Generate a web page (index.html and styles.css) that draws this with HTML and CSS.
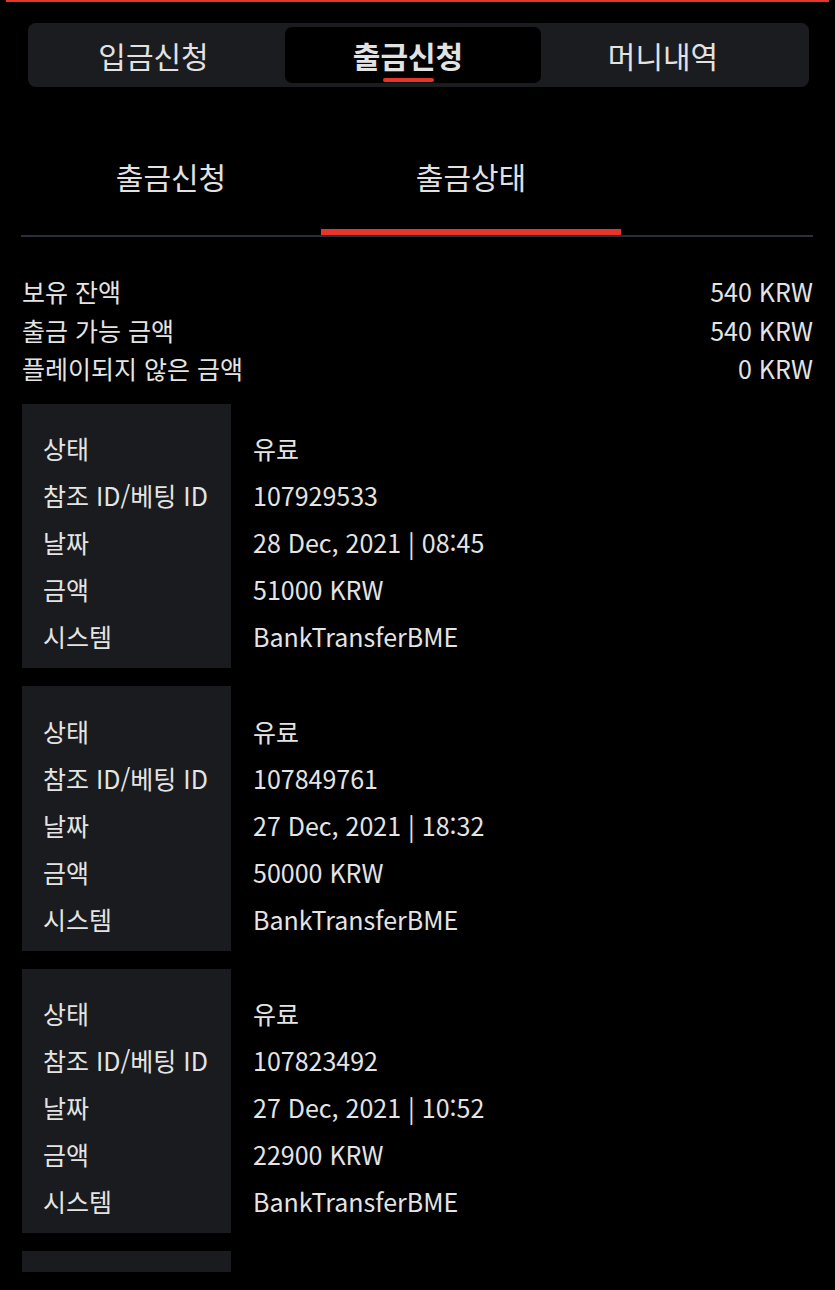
FILE: index.html
```html
<!DOCTYPE html>
<html lang="ko">
<head>
  <meta charset="UTF-8">
  <meta name="viewport" content="width=device-width, initial-scale=1.0">
  <title>출금상태</title>
  <link rel="stylesheet" href="styles.css">
</head>
<body>
  <div class="top-line"></div>

  <!-- 상단 탭 -->
  <nav class="main-tabs">
    <a class="main-tab">입금신청<span class="bar"></span></a>
    <a class="main-tab active">출금신청<span class="bar"></span></a>
    <a class="main-tab">머니내역<span class="bar"></span></a>
  </nav>

  <!-- 하위 탭 -->
  <nav class="sub-tabs">
    <a class="sub-tab">출금신청</a>
    <a class="sub-tab active">출금상태</a>
  </nav>

  <!-- 잔액 정보 -->
  <div class="balance">
    <div class="balance-row"><span>보유 잔액</span><span>540 KRW</span></div>
    <div class="balance-row"><span>출금 가능 금액</span><span>540 KRW</span></div>
    <div class="balance-row"><span>플레이되지 않은 금액</span><span>0 KRW</span></div>
  </div>

  <!-- 출금 내역 -->
  <div class="history">
    <div class="card">
      <ul class="labels">
        <li>상태</li>
        <li>참조 ID/베팅 ID</li>
        <li>날짜</li>
        <li>금액</li>
        <li>시스템</li>
      </ul>
      <ul class="values">
        <li>유료</li>
        <li>107929533</li>
        <li>28 Dec, 2021 | 08:45</li>
        <li>51000 KRW</li>
        <li>BankTransferBME</li>
      </ul>
    </div>

    <div class="card">
      <ul class="labels">
        <li>상태</li>
        <li>참조 ID/베팅 ID</li>
        <li>날짜</li>
        <li>금액</li>
        <li>시스템</li>
      </ul>
      <ul class="values">
        <li>유료</li>
        <li>107849761</li>
        <li>27 Dec, 2021 | 18:32</li>
        <li>50000 KRW</li>
        <li>BankTransferBME</li>
      </ul>
    </div>

    <div class="card">
      <ul class="labels">
        <li>상태</li>
        <li>참조 ID/베팅 ID</li>
        <li>날짜</li>
        <li>금액</li>
        <li>시스템</li>
      </ul>
      <ul class="values">
        <li>유료</li>
        <li>107823492</li>
        <li>27 Dec, 2021 | 10:52</li>
        <li>22900 KRW</li>
        <li>BankTransferBME</li>
      </ul>
    </div>

    <div class="card card-stub"></div>
  </div>
</body>
</html>
```

FILE: styles.css
```css
body {
  margin: 0;
  padding: 0;
  background-color: #000;
  color: #e4e4e4;
  font-family: "Noto Sans CJK KR", "Noto Sans", sans-serif;
}
ul {
  list-style: none;
  margin: 0;
  padding: 0;
}
a {
  cursor: pointer;
}
.top-line {
  height: 2px;
  margin: 0 6px;
  background-color: #e8352a;
}

/* 상단 탭 */
.main-tabs {
  display: grid;
  grid-template-columns: 253px 256px 1fr;
  height: 64px;
  box-sizing: border-box;
  margin: 21px 26px 0 28px;
  padding: 4px;
  background-color: #1b1c20;
  border-radius: 8px;
}
.main-tab {
  display: flex;
  flex-direction: column;
  align-items: center;
  padding: 10px 10px 0 0;
  font-size: 30px;
  line-height: 36px;
  color: #e2e2e2;
  border-radius: 7px;
  white-space: nowrap;
}
.main-tab:last-child {
  padding-right: 20px;
}
.main-tab .bar {
  width: 51px;
  height: 4px;
  margin-top: 5px;
  border-radius: 2px;
}
.main-tab.active {
  background-color: #000;
  font-weight: bold;
}
.main-tab.active .bar {
  background-color: #e8352a;
}

/* 하위 탭 */
.sub-tabs {
  display: flex;
  margin: 49px 22px 0 21px;
  border-bottom: 2px solid #2b2e3b;
}
.sub-tab {
  width: 300px;
  padding: 22px 0 35px;
  text-align: center;
  font-size: 30px;
  line-height: 36px;
  color: #e2e2e2;
  border-bottom: 6px solid transparent;
}
.sub-tab.active {
  border-bottom-color: #e8352a;
}

/* 잔액 */
.balance {
  margin: 35px 22px 0 22px;
  font-size: 25px;
  line-height: 38.5px;
}
.balance-row {
  display: flex;
  justify-content: space-between;
}

/* 내역 카드 */
.history {
  display: flex;
  flex-direction: column;
  gap: 18px;
  margin: 16px 22px 0 22px;
}
.card {
  display: flex;
  font-size: 25px;
  line-height: 47px;
}
.labels {
  width: 209px;
  box-sizing: border-box;
  padding: 21.5px 0 8px 21px;
  background-color: #1a1b1f;
  white-space: nowrap;
}
.values {
  padding: 21.5px 0 0 22px;
}
.card-stub {
  width: 209px;
  height: 21px;
  background-color: #1a1b1f;
}
```
